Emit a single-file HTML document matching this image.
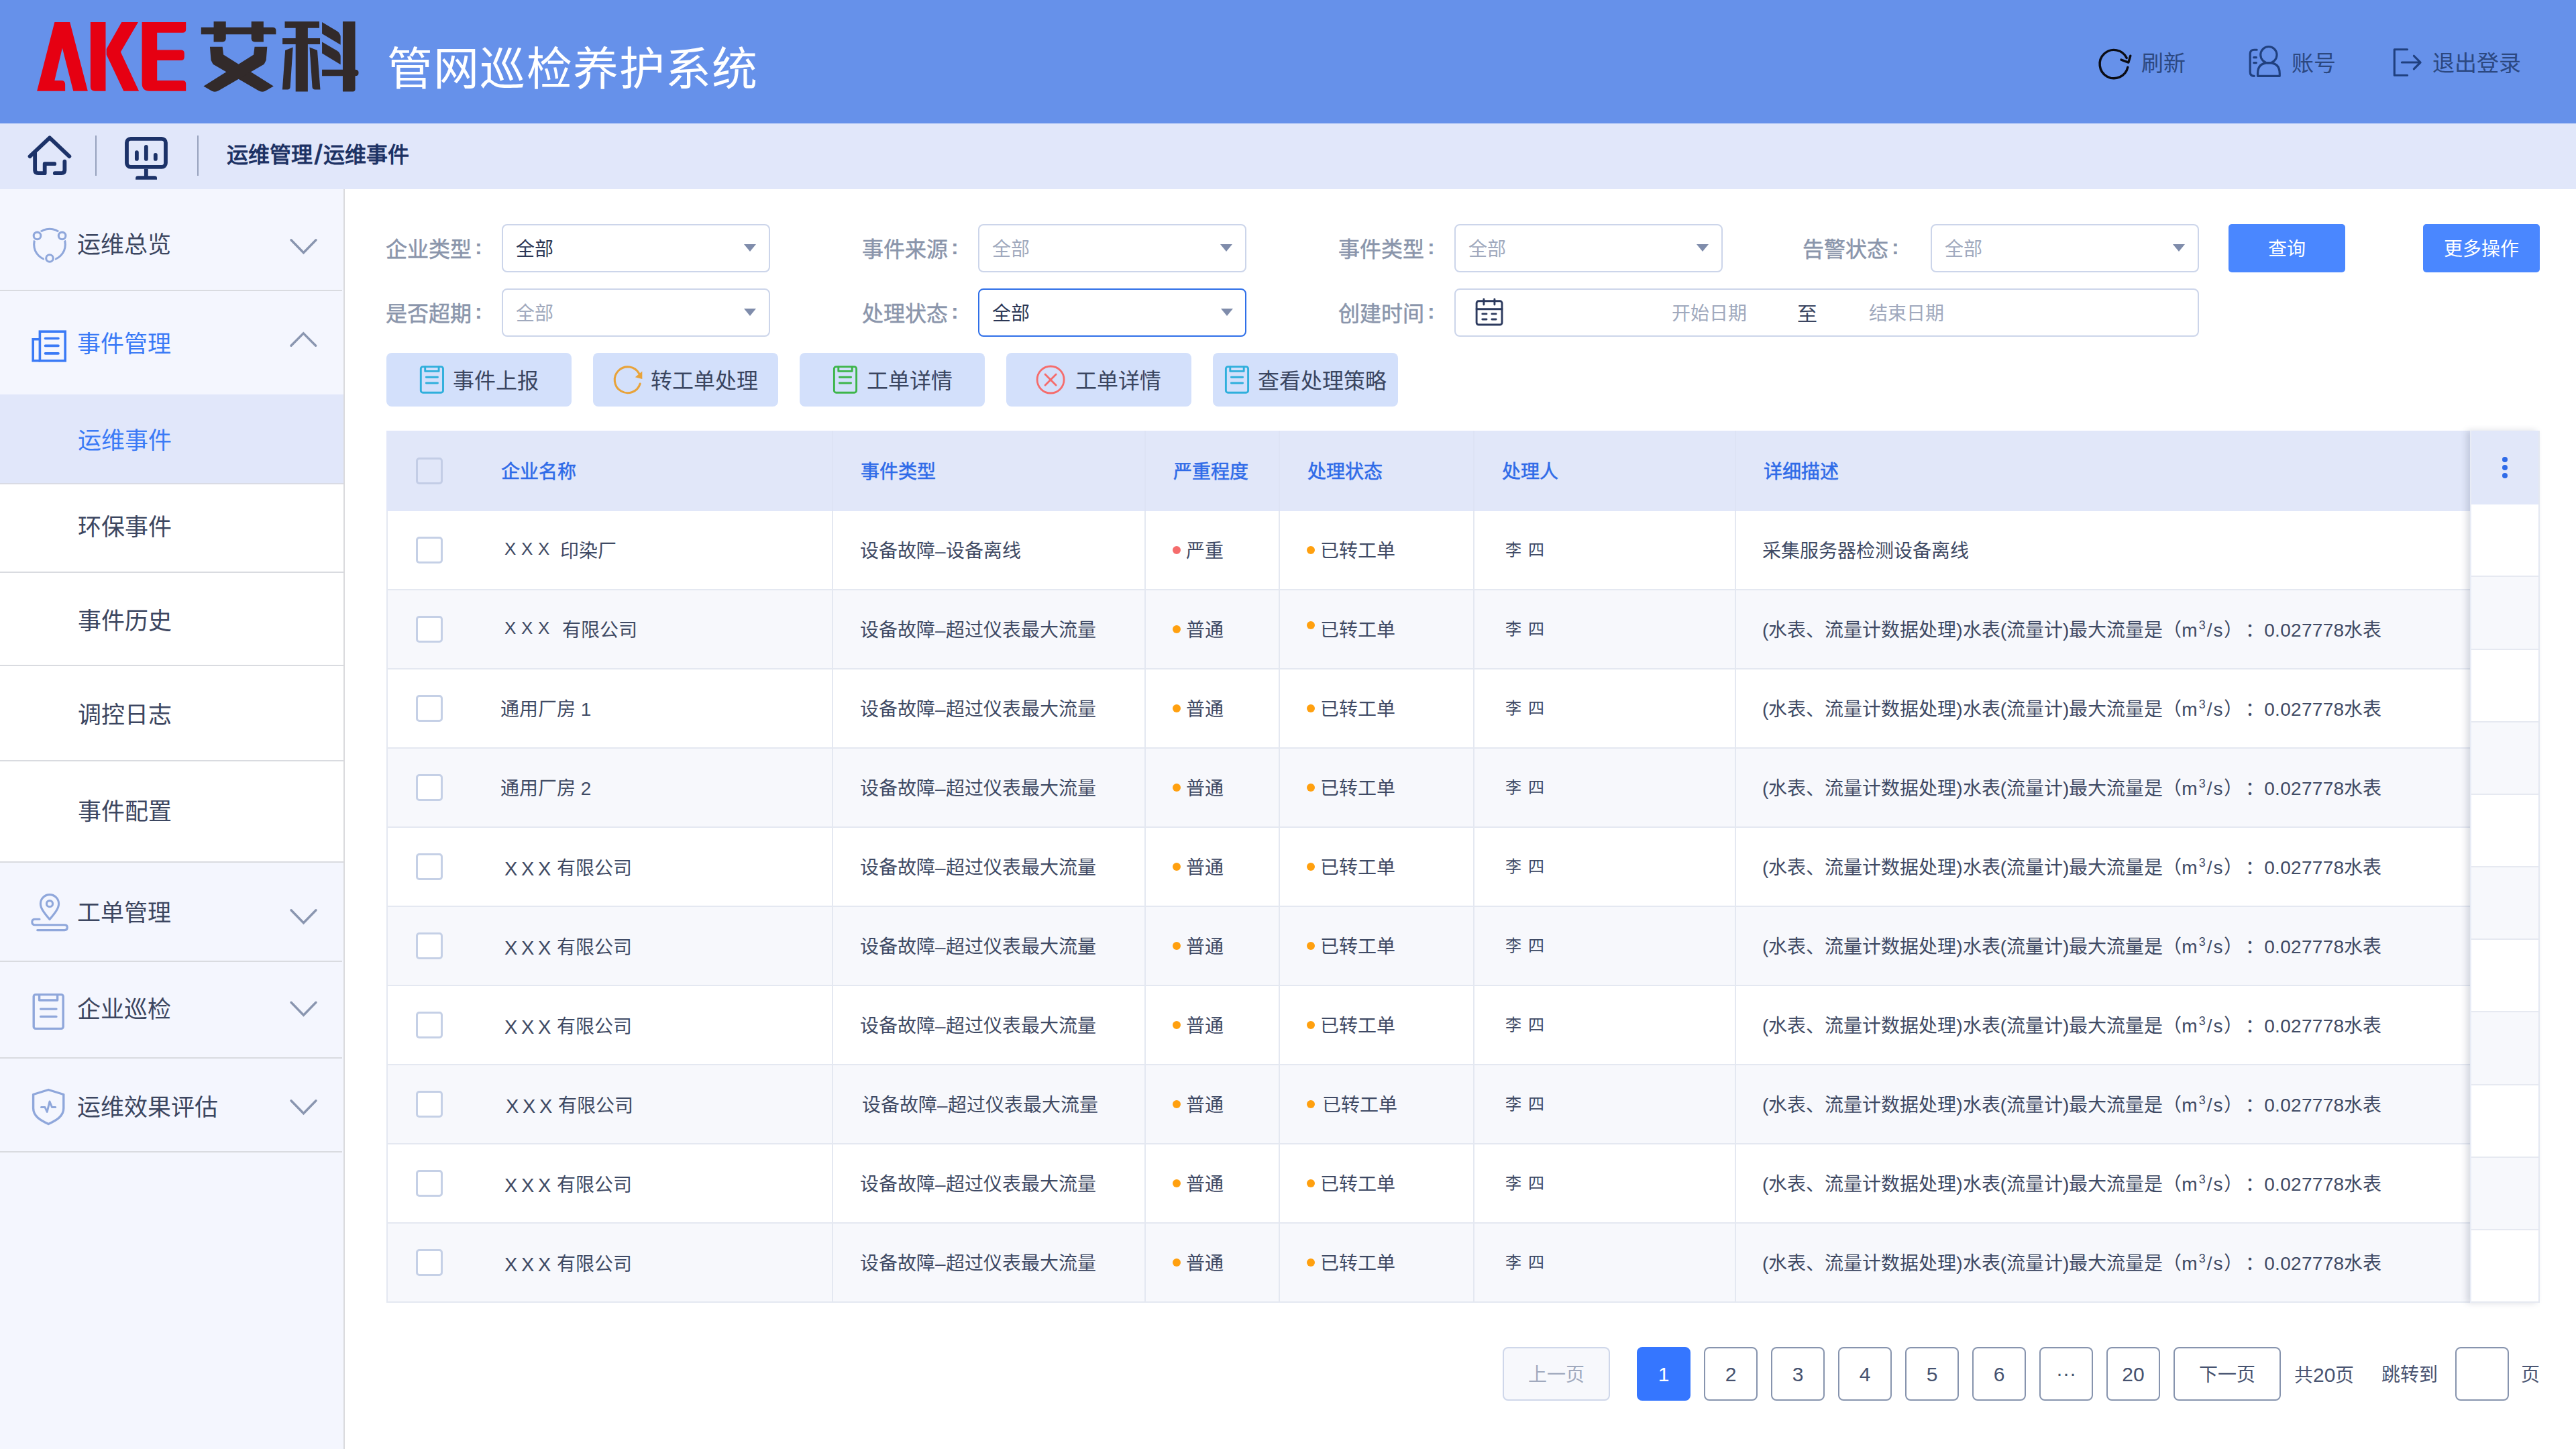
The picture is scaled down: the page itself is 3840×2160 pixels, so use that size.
<!DOCTYPE html>
<html lang="zh-CN">
<head>
<meta charset="utf-8">
<title>管网巡检养护系统</title>
<style>
*{box-sizing:border-box;margin:0;padding:0}
html,body{width:3840px;height:2160px;overflow:hidden;background:#fff}
body{font-family:"Liberation Sans",sans-serif;color:#3c4660;position:relative}
.abs{position:absolute}
.t{position:absolute;white-space:nowrap;height:60px;line-height:60px}
svg{position:absolute;overflow:visible}

/* header */
#hdr{left:0;top:0;width:3840px;height:184px;background:#6691ea}
#title{left:577px;top:63px;height:80px;line-height:80px;font-size:68px;color:#fff;letter-spacing:1.2px}
.hbtn{font-size:33px;color:#2c4880}

/* breadcrumb */
#crumb{left:0;top:184px;width:3840px;height:98px;background:#e1e7fa}
.vsep{position:absolute;top:202px;width:2px;height:60px;background:#97a2bd}
#crumbtxt{left:338px;top:201px;font-size:32px;font-weight:bold;color:#1d3264}

/* sidebar */
#side{left:0;top:282px;width:512px;height:1878px;background:#f4f6fe}
#sideline{left:512px;top:282px;width:2px;height:1878px;background:#d9dadd;z-index:3}
.mi{position:absolute;left:0;width:510px;border-bottom:2px solid #d9dbe0}
.mi.sub{background:#fff;width:512px}
.mi.act{background:#e1e7fa;border-bottom:2px solid #d9dbe4}
.st{font-size:35px;color:#3c4660;left:115px}
.st.s2{left:116px}
.blue{color:#3a7af6}

/* filters */
.lbl{font-size:32px;color:#8a95ab;font-weight:500;-webkit-text-stroke:0.5px #8a95ab;height:72px;line-height:72px}
.sel{position:absolute;width:400px;height:72px;border:2px solid #ccd5ea;border-radius:8px;background:#fff}
.sel.focus{border:2.5px solid #2f6fe8}
.sel .v{position:absolute;left:19px;top:2px;height:68px;line-height:68px;font-size:28px;color:#a0a9bd;white-space:nowrap}
.sel .v.dk{color:#2b3654}
.sel.focus .v{left:18.5px;top:1.5px}
.sel i{position:absolute;right:19px;top:28px;width:0;height:0;border-left:9px solid transparent;border-right:9px solid transparent;border-top:11px solid #7f8cab}
.sel.focus i{right:18.5px;top:27.5px}
.pbtn{position:absolute;width:174px;height:72px;line-height:76px;border-radius:5px;background:#4a87ff;color:#fff;font-size:28px;text-align:center;white-space:nowrap}
.co{margin-left:5px;font-weight:bold;position:relative;top:-4px;-webkit-text-stroke:0}
.ph{font-size:28px;color:#a0a9bd;height:72px;line-height:72px}

/* toolbar */
.tb{position:absolute;top:526px;width:276px;height:80px;border-radius:8px;background:#d3e0fb}
.tbt{font-size:32px;color:#3a4560;top:538px;height:60px;line-height:60px}

/* table */
#tbl{left:576px;top:642px;width:3106px;height:1300px}
#thead{position:absolute;left:0;top:0;width:3106px;height:120px;background:#e1e7f9}
.row{position:absolute;left:0;width:3106px;height:118px;border-bottom:2px solid #e4e8f1;border-left:2px solid #e4e8f1;background:#fff}
.row.alt{background:#f7f8fc}
.vl{position:absolute;top:120px;width:2px;height:1180px;background:#e4e8f1}
.vlh{position:absolute;top:0;width:2px;height:120px;background:#dde3f5}
.cb{position:absolute;left:42px;width:40px;height:40px;border:3px solid #c5d0e6;border-radius:5px;background:#fff}
.cbh{background:#e1e7f9;border-color:#c3cde6}
.th{position:absolute;top:32px;height:60px;line-height:60px;font-size:28px;font-weight:normal;-webkit-text-stroke:0.55px #2f6be8;color:#2f6be8;white-space:nowrap}
.c{position:absolute;top:30px;height:60px;line-height:60px;font-size:28px;color:#3f4a64;white-space:nowrap}
.dot{position:absolute;top:52px;width:12px;height:12px;border-radius:50%;background:#ffa00f}
.dot.red{background:#f56c6c}
.c.c1{left:168px}
.c.c2{left:704px}
.c.c3{left:1190px}
.c.c4{left:1390px}
.c.c5{left:1666px;font-size:24px;top:28px;word-spacing:3px}
.c.c6{left:2049px}
.sup{font-size:18px;position:relative;top:-11px;line-height:0}
.u{letter-spacing:2px}
.col{padding:0 0 0 18px;margin-right:-8px}
.num{letter-spacing:.3px}
.x{letter-spacing:7.7px;font-size:26px;margin-left:6px;position:relative;top:-4px}
.x2{letter-spacing:5.7px;font-size:29px;margin-left:6px;margin-right:3px;position:relative;top:1px}
/* fixed col */
#fix{left:3682px;top:642px;width:104px;height:1300px;box-shadow:-5px 0 9px rgba(70,80,110,.2);background:#fff;border-right:2px solid #e4e8f1;border-left:2px solid #e8ecf6}
#fix div{position:absolute;left:0;width:100px;height:108px;border-bottom:2px solid #e6e9f1;background:#fff}
#fix div.alt{background:#f7f8fc}
#fix div.h{top:0;height:110px;background:#e1e7f9;border-bottom:none}
#fix b{position:absolute;left:46px;width:8px;height:8px;border-radius:50%;background:#2f6be8}

/* pagination */
.pg{position:absolute;top:2008px;width:80px;height:80px;line-height:77px;border:2px solid #8794ae;border-radius:8px;text-align:center;font-size:30px;color:#46526f;font-weight:300;white-space:nowrap;background:#fff}
.pg.w{width:160px;font-size:28px;line-height:80px}
.pg.dis{background:#f7f8fc;border-color:#cfd7ea;color:#a0a9bd}
.pg.on{background:#3576ff;border-color:#3576ff;color:#fff}
.pgt{font-size:28px;color:#4a5572;font-weight:300;top:2020px;height:60px;line-height:60px}
</style>
</head>
<body>

<!-- ================= HEADER ================= -->
<div id="hdr" class="abs"></div>
<svg id="logo" viewBox="0 0 2576 644" style="left:40px;top:20px;width:520px;height:130px">
<g fill="#e60012">
<path d="M75,573 L205,65 L318,65 L450,573 L343,573 L262,255 L205,495 L255,495 Q283,495 283,523 L283,573 Z"/>
<path d="M470,65 L582,65 L582,573 L503,573 Q470,573 470,540 Z"/>
<path d="M700,65 L822,65 L693,285 L828,573 L715,573 L588,305 L588,262 Z"/>
<path d="M850,65 L1175,65 L1175,118 Q1175,143 1150,143 L962,143 L962,270 L1138,270 Q1163,270 1163,295 L1163,322 Q1163,347 1138,347 L962,347 L962,495 L1150,495 Q1175,495 1175,520 L1175,573 L905,573 Q850,573 850,518 Z"/>
</g>
<g fill="#322a2a">
<path d="M1287,103 L1815,103 Q1840,103 1840,128 L1840,155 L1287,155 Z"/>
<path d="M1380,60 L1470,60 L1470,185 Q1470,210 1445,210 L1380,210 Z"/>
<path d="M1658,60 L1748,60 L1748,210 L1683,210 Q1658,210 1658,185 Z"/>
<path d="M1352,247 L1445,247 L1452,305 L1822,537 L1760,573 Q1735,584 1710,570 L1375,375 L1360,345 Z"/>
<path d="M1775,247 L1682,247 L1675,305 L1305,537 L1367,573 Q1392,584 1417,570 L1752,375 L1767,345 Z"/>
<path d="M1905,60 L2160,60 L2160,108 L2075,108 L2075,183 L2165,183 L2165,228 L2075,228 L2075,577 L1985,577 L1985,228 L1888,228 L1888,183 L1985,183 L1985,108 L1905,108 Z"/>
<path d="M1908,272 L1965,250 L1945,545 Q1943,562 1925,562 L1887,562 Z"/>
<path d="M2088,250 L2145,272 L2167,562 L2128,562 Q2110,562 2108,545 Z"/>
<path d="M2333,60 L2425,60 L2425,415 L2425,415 Q2450,415 2450,438 Q2450,462 2425,462 L2425,560 Q2425,577 2408,577 L2333,577 L2333,462 L2180,462 L2180,415 L2333,415 Z"/>
<path d="M2180,65 L2290,130 Q2317,148 2317,175 L2317,232 L2180,150 Z"/>
<path d="M2180,210 L2290,275 Q2317,292 2317,320 L2317,378 L2180,295 Z"/>
</g></svg>
<div id="title" class="t">管网巡检养护系统</div>
<svg viewBox="0 0 2576 341" style="left:3110px;top:50px;width:680px;height:90px" fill="none" stroke-linecap="round" stroke-linejoin="round">
<g stroke="#0b0c14" stroke-width="13">
<path d="M234,190 A80,80 0 1 1 228,138"/>
<path d="M249,126 L238,163 L197,148"/>
</g>
<g stroke="#20407f" stroke-width="12">
<circle cx="1030" cy="120" r="46"/>
<path d="M968,240 L968,225 Q968,165 1030,165 Q1092,165 1092,225 L1092,240 Z"/>
<path d="M963,92 L948,92 Q925,92 925,115 L925,217 Q925,240 948,240"/>
<path d="M946,135 L960,135 M946,165 L960,165"/>
<path d="M1813,90 L1740,90 L1740,236 L1813,236"/>
<path d="M1782,163 L1885,163 M1850,126 L1887,163 L1850,200"/>
</g></svg>
<div class="t hbtn" style="left:3192px;top:65px">刷新</div>
<div class="t hbtn" style="left:3416px;top:65px">账号</div>
<div class="t hbtn" style="left:3626px;top:65px">退出登录</div>

<!-- ================= BREADCRUMB ================= -->
<div id="crumb" class="abs"></div>
<svg viewBox="0 0 2576 738" style="left:30px;top:190px;width:300px;height:86px" fill="none" stroke="#1c3268" stroke-width="50" stroke-linecap="round" stroke-linejoin="round">
<path d="M125,370 L378,132 L630,370"/>
<path d="M190,325 L190,545 Q190,585 230,585 L315,585 L315,465 L440,465"/>
<path d="M570,435 L570,545 Q570,585 530,585 L445,585"/>
<rect x="1365" y="145" width="498" height="360" rx="50"/>
<path d="M1493,318 L1493,403 M1613,248 L1613,403 M1733,350 L1733,403"/>
<path d="M1613,530 L1613,640" stroke-linecap="butt"/>
<path d="M1478,668 L1478,650 Q1478,620 1508,620 L1722,620 Q1752,620 1752,650 L1752,668 Z" fill="#1c3268" stroke="none"/>
</svg>
<div class="vsep" style="left:142px"></div>
<div class="vsep" style="left:294px"></div>
<div id="crumbtxt" class="t">运维管理<span style="padding:0 2px 0 3px;font-size:40px;line-height:0;position:relative;top:3px;font-weight:normal;-webkit-text-stroke:1px #1d3264">/</span>运维事件</div>

<!-- ================= SIDEBAR ================= -->
<div id="side" class="abs"></div>
<div id="sideline" class="abs"></div>
<div class="mi" style="top:282px;height:152px"></div>
<div class="mi" style="top:434px;height:154px;border-bottom:none"></div>
<div class="mi sub act" style="top:588px;height:134px"></div>
<div class="mi sub" style="top:722px;height:132px"></div>
<div class="mi sub" style="top:854px;height:139px"></div>
<div class="mi sub" style="top:993px;height:142px"></div>
<div class="mi sub" style="top:1135px;height:151px"></div>
<div class="mi" style="top:1286px;height:148px"></div>
<div class="mi" style="top:1434px;height:144px"></div>
<div class="mi" style="top:1578px;height:140px"></div>

<div class="t st" style="top:335px">运维总览</div>
<div class="t st blue" style="top:483px">事件管理</div>
<div class="t st s2 blue" style="top:627px">运维事件</div>
<div class="t st s2" style="top:756px">环保事件</div>
<div class="t st s2" style="top:896px">事件历史</div>
<div class="t st s2" style="top:1036px">调控日志</div>
<div class="t st s2" style="top:1180px">事件配置</div>
<div class="t st" style="top:1331px">工单管理</div>
<div class="t st" style="top:1475px">企业巡检</div>
<div class="t st" style="top:1621px">运维效果评估</div>
<svg viewBox="0 0 512 1878" style="left:0;top:282px;width:512px;height:1878px" fill="none" stroke-linecap="round" stroke-linejoin="round">
<g stroke="#8fa7db" stroke-width="3.1" transform="translate(0,-282)">
<circle cx="74" cy="364.5" r="23.3"/>
<g fill="#f4f6fe"><circle cx="55.5" cy="351.4" r="8.3" stroke="none"/><circle cx="92.6" cy="351.4" r="8.3" stroke="none"/><circle cx="74" cy="385" r="8.3" stroke="none"/>
<circle cx="55.5" cy="351.4" r="5.3"/><circle cx="92.6" cy="351.4" r="5.3"/><circle cx="74" cy="385" r="5.3"/></g>
<!-- location -->
<path d="M74,1370.5 C66,1361 60.4,1354 60.4,1347.2 A13.6,13.6 0 1 1 87.6,1347.2 C87.6,1354 82,1361 74,1370.5 Z"/>
<circle cx="74" cy="1347.2" r="4.6"/>
<path d="M59,1370.3 L52,1370.3 Q47.8,1370.3 47.8,1374.5 Q47.8,1378.7 52,1378.7 L96.3,1378.7 Q100.3,1378.7 100.3,1382.6 Q100.3,1386.6 96.3,1386.6 L55.7,1386.6"/>
<!-- clipboard -->
<g stroke-width="3.4"><rect x="50.2" y="1482.6" width="44" height="50.8" rx="3"/>
<path d="M58.6,1483 L58.6,1491 L85.6,1491 L85.6,1483"/>
<path d="M60.6,1504.1 L84,1504.1 M60.6,1515.4 L84,1515.4"/></g>
<!-- shield -->
<g stroke-width="3.4"><path d="M72.2,1624.5 L94.8,1631.5 L94.8,1652 C94.8,1664 84,1670 72.2,1675.5 C60.4,1670 49.6,1664 49.6,1652 L49.6,1631.5 Z"/>
<path d="M61.5,1650.5 L67,1650.5 L70.2,1657.5 L74,1642 L77.5,1650.5 L82.7,1650.5" stroke-width="3"/></g>
</g>
<g stroke="#3a7af6" stroke-width="3.6" stroke-linejoin="miter" stroke-linecap="butt" transform="translate(0,-282)">
<rect x="59.4" y="494.2" width="37.8" height="43.6"/>
<path d="M59.4,505.8 L49.2,505.8 L49.2,537.8 L59.4,537.8"/>
<path d="M67.5,504.5 L87,504.5 M67.5,515.4 L87,515.4 M67.5,526.9 L87,526.9" stroke-linecap="round"/>
</g>
<!-- chevrons -->
<g stroke="#8a96b0" stroke-width="3.4" stroke-linecap="round" stroke-linejoin="miter" transform="translate(0,-282)">
<path d="M434,357.8 L452.5,376.8 L471,357.8"/>
<path d="M434,515.3 L452.3,496.8 L470.6,515.3"/>
<path d="M434,1356.8 L452.5,1375.8 L471,1356.8"/>
<path d="M434,1494.3 L452.5,1513.3 L471,1494.3"/>
<path d="M434,1640.8 L452.5,1659.8 L471,1640.8"/>
</g></svg>

<!-- ================= MAIN ================= -->
<div class="t lbl" style="left:575px;top:336px">企业类型<span class="co">:</span></div>
<div class="sel" style="left:748px;top:334px"><span class="v dk">全部</span><i></i></div>
<div class="t lbl" style="left:1285px;top:336px">事件来源<span class="co">:</span></div>
<div class="sel" style="left:1458px;top:334px"><span class="v">全部</span><i></i></div>
<div class="t lbl" style="left:1995px;top:336px">事件类型<span class="co">:</span></div>
<div class="sel" style="left:2168px;top:334px"><span class="v">全部</span><i></i></div>
<div class="t lbl" style="left:2687px;top:336px">告警状态<span class="co">:</span></div>
<div class="sel" style="left:2878px;top:334px"><span class="v">全部</span><i></i></div>
<div class="t lbl" style="left:575px;top:432px">是否超期<span class="co">:</span></div>
<div class="sel" style="left:748px;top:430px"><span class="v">全部</span><i></i></div>
<div class="t lbl" style="left:1285px;top:432px">处理状态<span class="co">:</span></div>
<div class="sel focus" style="left:1458px;top:430px"><span class="v dk">全部</span><i></i></div>
<div class="t lbl" style="left:1995px;top:432px">创建时间<span class="co">:</span></div>
<div class="sel" style="left:2168px;top:430px;width:1110px"></div>
<svg viewBox="0 0 100 60" style="left:2180px;top:436px;width:100px;height:60px" fill="none" stroke="#2c3a5e" stroke-width="2.9" stroke-linecap="round" stroke-linejoin="round">
<rect x="21.1" y="12.8" width="37.9" height="35.2" rx="3"/>
<path d="M21.1,24.8 L59,24.8"/>
<path d="M31.9,9.9 L31.9,18 M47.9,9.9 L47.9,18"/>
<path d="M29.8,31.9 L36,31.9 M43.9,31.9 L50.1,31.9 M29.8,40 L36,40 M43.9,40 L50.1,40"/>
</svg>
<div class="t ph" style="left:2492px;top:432px">开始日期</div>
<div class="t ph" style="left:2679px;top:432px;font-size:30px;color:#3a4560">至</div>
<div class="t ph" style="left:2786px;top:432px">结束日期</div>
<div class="pbtn" style="left:3322px;top:334px">查询</div>
<div class="pbtn" style="left:3612px;top:334px">更多操作</div>
<div class="tb" style="left:576px"></div>
<div class="t tbt" style="left:675px">事件上报</div>
<div class="tb" style="left:884px"></div>
<div class="t tbt" style="left:970px">转工单处理</div>
<div class="tb" style="left:1192px"></div>
<div class="t tbt" style="left:1292px">工单详情</div>
<div class="tb" style="left:1500px"></div>
<div class="t tbt" style="left:1603px">工单详情</div>
<div class="tb" style="left:1808px"></div>
<div class="t tbt" style="left:1875px">查看处理策略</div>
<svg viewBox="0 0 3840 2160" style="left:0;top:0;width:3840px;height:2160px;pointer-events:none" fill="none" stroke-linecap="round" stroke-linejoin="round"><g stroke="#2fafdc" stroke-width="2.9"><rect x="627.3000000000001" y="546.6" width="33.2" height="38.6" rx="3"/>
<path d="M633.7,547 L633.7,553.4 L654.1,553.4 L654.1,547"/>
<path d="M635.3000000000001,562.3 L652.5,562.3 M635.3000000000001,571 L652.5,571"/></g><g stroke="#3db54a" stroke-width="2.9"><rect x="1243.4" y="546.6" width="33.2" height="38.6" rx="3"/>
<path d="M1249.8,547 L1249.8,553.4 L1270.2,553.4 L1270.2,547"/>
<path d="M1251.4,562.3 L1268.6000000000001,562.3 M1251.4,571 L1268.6000000000001,571"/></g><g stroke="#2fafdc" stroke-width="2.9"><rect x="1827.4" y="546.6" width="33.2" height="38.6" rx="3"/>
<path d="M1833.8,547 L1833.8,553.4 L1854.2,553.4 L1854.2,547"/>
<path d="M1835.4,562.3 L1852.6000000000001,562.3 M1835.4,571 L1852.6000000000001,571"/></g><g stroke="#e8a33a" stroke-width="3.1"><path d="M954.2,572 A19.4,19.4 0 1 1 952.6,556.8"/></g>
<path d="M946.8,562.2 L957.3,553.6 L957.3,565" fill="#e8a33a" stroke="none"/>
<g stroke="#f56c6c" stroke-width="2.8"><circle cx="1566.1" cy="566" r="20"/><path d="M1558,558 L1574.2,574.2 M1574.2,558 L1558,574.2"/></g>
</svg>
<div id="tbl" class="abs">
<div id="thead"></div>
<div class="vlh" style="left:664px"></div>
<div class="vlh" style="left:1130px"></div>
<div class="vlh" style="left:1330px"></div>
<div class="vlh" style="left:1620px"></div>
<div class="vlh" style="left:2010px"></div>
<div class="cb cbh" style="top:40px;left:44px"></div>
<div class="th" style="left:171px">企业名称</div>
<div class="th" style="left:707px">事件类型</div>
<div class="th" style="left:1173px">严重程度</div>
<div class="th" style="left:1373px">处理状态</div>
<div class="th" style="left:1663px">处理人</div>
<div class="th" style="left:2053px">详细描述</div>
<div class="row" style="top:120px">
<div class="cb" style="top:38px"></div>
<div class="c c1"><span class="x">XXX</span>&nbsp;印染厂</div>
<div class="c c2">设备故障–设备离线</div>
<span class="dot red" style="left:1170px"></span><div class="c c3">严重</div>
<span class="dot" style="left:1370px"></span><div class="c c4">已转工单</div>
<div class="c c5">李 四</div>
<div class="c c6">采集服务器检测设备离线</div>
</div>
<div class="row alt" style="top:238px">
<div class="cb" style="top:38px"></div>
<div class="c c1"><span class="x" style="margin-right:3px">XXX</span>&nbsp;有限公司</div>
<div class="c c2">设备故障–超过仪表最大流量</div>
<span class="dot" style="left:1170px"></span><div class="c c3">普通</div>
<span class="dot" style="left:1370px;top:46px"></span><div class="c c4">已转工单</div>
<div class="c c5">李 四</div>
<div class="c c6">(水表、流量计数据处理)水表(流量计)最大流量是（<span class="u">m<span class="sup">3</span>/s</span>）<span class="col">：</span> <span class="num">0.027778</span>水表</div>
</div>
<div class="row" style="top:356px">
<div class="cb" style="top:38px"></div>
<div class="c c1">通用厂房 1</div>
<div class="c c2">设备故障–超过仪表最大流量</div>
<span class="dot" style="left:1170px"></span><div class="c c3">普通</div>
<span class="dot" style="left:1370px"></span><div class="c c4">已转工单</div>
<div class="c c5">李 四</div>
<div class="c c6">(水表、流量计数据处理)水表(流量计)最大流量是（<span class="u">m<span class="sup">3</span>/s</span>）<span class="col">：</span> <span class="num">0.027778</span>水表</div>
</div>
<div class="row alt" style="top:474px">
<div class="cb" style="top:38px"></div>
<div class="c c1">通用厂房 2</div>
<div class="c c2">设备故障–超过仪表最大流量</div>
<span class="dot" style="left:1170px"></span><div class="c c3">普通</div>
<span class="dot" style="left:1370px"></span><div class="c c4">已转工单</div>
<div class="c c5">李 四</div>
<div class="c c6">(水表、流量计数据处理)水表(流量计)最大流量是（<span class="u">m<span class="sup">3</span>/s</span>）<span class="col">：</span> <span class="num">0.027778</span>水表</div>
</div>
<div class="row" style="top:592px">
<div class="cb" style="top:38px"></div>
<div class="c c1"><span class="x2">XXX</span>有限公司</div>
<div class="c c2">设备故障–超过仪表最大流量</div>
<span class="dot" style="left:1170px"></span><div class="c c3">普通</div>
<span class="dot" style="left:1370px"></span><div class="c c4">已转工单</div>
<div class="c c5">李 四</div>
<div class="c c6">(水表、流量计数据处理)水表(流量计)最大流量是（<span class="u">m<span class="sup">3</span>/s</span>）<span class="col">：</span> <span class="num">0.027778</span>水表</div>
</div>
<div class="row alt" style="top:710px">
<div class="cb" style="top:38px"></div>
<div class="c c1"><span class="x2">XXX</span>有限公司</div>
<div class="c c2">设备故障–超过仪表最大流量</div>
<span class="dot" style="left:1170px"></span><div class="c c3">普通</div>
<span class="dot" style="left:1370px"></span><div class="c c4">已转工单</div>
<div class="c c5">李 四</div>
<div class="c c6">(水表、流量计数据处理)水表(流量计)最大流量是（<span class="u">m<span class="sup">3</span>/s</span>）<span class="col">：</span> <span class="num">0.027778</span>水表</div>
</div>
<div class="row" style="top:828px">
<div class="cb" style="top:38px"></div>
<div class="c c1"><span class="x2">XXX</span>有限公司</div>
<div class="c c2">设备故障–超过仪表最大流量</div>
<span class="dot" style="left:1170px"></span><div class="c c3">普通</div>
<span class="dot" style="left:1370px"></span><div class="c c4">已转工单</div>
<div class="c c5">李 四</div>
<div class="c c6">(水表、流量计数据处理)水表(流量计)最大流量是（<span class="u">m<span class="sup">3</span>/s</span>）<span class="col">：</span> <span class="num">0.027778</span>水表</div>
</div>
<div class="row alt" style="top:946px">
<div class="cb" style="top:38px"></div>
<div class="c c1" style="left:170px"><span class="x2">XXX</span>有限公司</div>
<div class="c c2" style="left:707px">设备故障–超过仪表最大流量</div>
<span class="dot" style="left:1170px"></span><div class="c c3">普通</div>
<span class="dot" style="left:1370px"></span><div class="c c4" style="left:1393px">已转工单</div>
<div class="c c5">李 四</div>
<div class="c c6">(水表、流量计数据处理)水表(流量计)最大流量是（<span class="u">m<span class="sup">3</span>/s</span>）<span class="col">：</span> <span class="num">0.027778</span>水表</div>
</div>
<div class="row" style="top:1064px">
<div class="cb" style="top:38px"></div>
<div class="c c1"><span class="x2">XXX</span>有限公司</div>
<div class="c c2">设备故障–超过仪表最大流量</div>
<span class="dot" style="left:1170px"></span><div class="c c3">普通</div>
<span class="dot" style="left:1370px"></span><div class="c c4">已转工单</div>
<div class="c c5">李 四</div>
<div class="c c6">(水表、流量计数据处理)水表(流量计)最大流量是（<span class="u">m<span class="sup">3</span>/s</span>）<span class="col">：</span> <span class="num">0.027778</span>水表</div>
</div>
<div class="row alt" style="top:1182px">
<div class="cb" style="top:38px"></div>
<div class="c c1"><span class="x2">XXX</span>有限公司</div>
<div class="c c2">设备故障–超过仪表最大流量</div>
<span class="dot" style="left:1170px"></span><div class="c c3">普通</div>
<span class="dot" style="left:1370px"></span><div class="c c4">已转工单</div>
<div class="c c5">李 四</div>
<div class="c c6">(水表、流量计数据处理)水表(流量计)最大流量是（<span class="u">m<span class="sup">3</span>/s</span>）<span class="col">：</span> <span class="num">0.027778</span>水表</div>
</div>
<div class="vl" style="left:664px"></div>
<div class="vl" style="left:1130px"></div>
<div class="vl" style="left:1330px"></div>
<div class="vl" style="left:1620px"></div>
<div class="vl" style="left:2010px"></div>
</div>
<div id="fix" class="abs">
<div class="h"><b style="top:39px"></b><b style="top:51px"></b><b style="top:63px"></b></div>
<div style="top:110px;height:108px"></div>
<div class="alt" style="top:218px;height:109px"></div>
<div style="top:327px;height:108px"></div>
<div class="alt" style="top:435px;height:108px"></div>
<div style="top:543px;height:108px"></div>
<div class="alt" style="top:651px;height:108px"></div>
<div style="top:759px;height:108px"></div>
<div class="alt" style="top:867px;height:109px"></div>
<div style="top:976px;height:108px"></div>
<div class="alt" style="top:1084px;height:108px"></div>
<div style="top:1192px;height:108px"></div>
</div>
<div class="pg w dis" style="left:2240px">上一页</div>
<div class="pg on" style="left:2440px">1</div>
<div class="pg" style="left:2540px">2</div>
<div class="pg" style="left:2640px">3</div>
<div class="pg" style="left:2740px">4</div>
<div class="pg" style="left:2840px">5</div>
<div class="pg" style="left:2940px">6</div>
<div class="pg" style="left:3040px;line-height:73px">···</div>
<div class="pg" style="left:3140px">20</div>
<div class="pg w" style="left:3240px">下一页</div>
<div class="t pgt" style="left:3420px">共<span style="font-size:30px">20</span>页</div>
<div class="t pgt" style="left:3550px">跳转到</div>
<div class="pg" style="left:3660px"></div>
<div class="t pgt" style="left:3758px">页</div>

</body>
</html>
